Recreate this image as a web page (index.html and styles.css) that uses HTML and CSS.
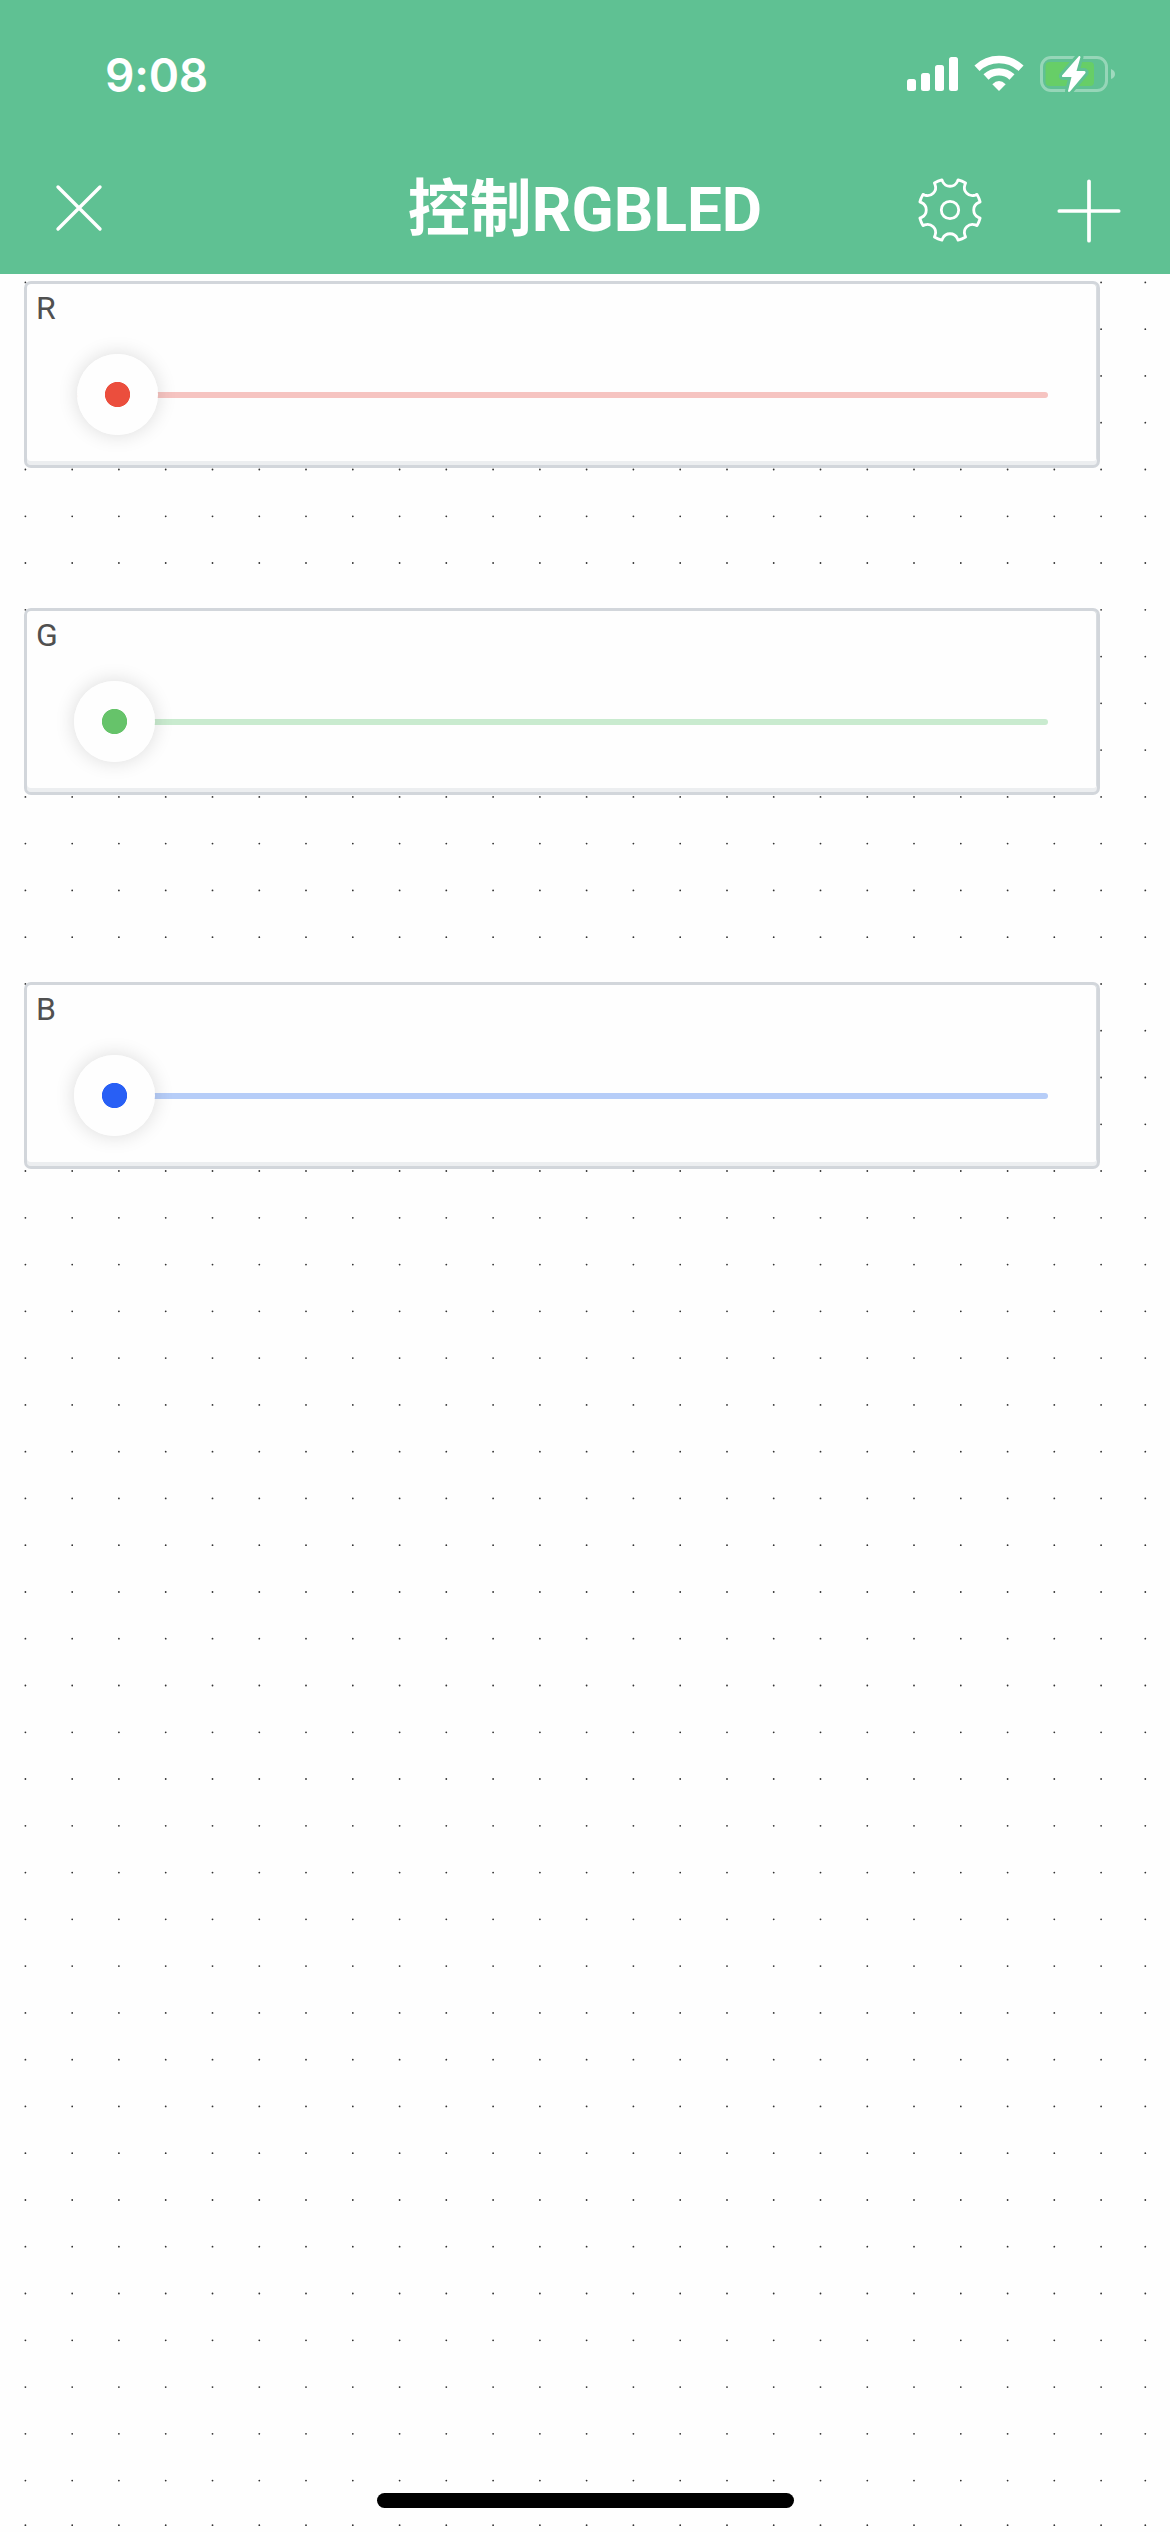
FILE: index.html
```html
<!DOCTYPE html>
<html lang="zh-CN">
<head>
<meta charset="utf-8">
<title>控制RGBLED</title>
<link rel="stylesheet" href="styles.css">
</head>
<body>
<header class="header">
  <div class="status">
    <span class="time">9:08</span>
    <svg class="status-icons" width="210" height="40" viewBox="906 54 210 40">
      <g fill="#fff">
        <rect x="907" y="79" width="9" height="12" rx="2.5"/>
        <rect x="921" y="73" width="9" height="18" rx="2.5"/>
        <rect x="935" y="65" width="9" height="26" rx="2.5"/>
        <rect x="949" y="57" width="9" height="34" rx="2.5"/>
      </g>
      <g fill="none" stroke="#fff" stroke-width="7.4">
        <path d="M977 68.2A32 32 0 0 1 1021 68.2"/>
        <path d="M986 77A19 19 0 0 1 1012 77"/>
      </g>
      <path d="M999 91L992.3 84.2Q999 77.8 1005.7 84.2Z" fill="#fff"/>
      <rect x="1041.5" y="57.5" width="65" height="33" rx="9.5" fill="none" stroke="#fff" stroke-opacity=".35" stroke-width="3"/>
      <path d="M1111 69Q1115 70.500 1115 74T1111 79Z" fill="#fff" fill-opacity=".4"/>
      <rect x="1045.500" y="62" width="48.500" height="24" rx="4" fill="#67ce67"/>
      <path d="M1079 56L1062 75.500Q1061.500 77 1063 77H1071.500L1068 91Q1068.500 92.500 1070 91.500L1085.500 73Q1086 71.500 1084.500 71H1076.500L1080.500 57Q1080 55.500 1079 56Z" fill="#fff" stroke="#5fc193" stroke-width="6" stroke-linejoin="round" paint-order="stroke"/>
    </svg>
  </div>
  <nav class="navbar">
    <svg class="close" width="48" height="48" viewBox="0 0 48 48"><path d="M3 3L45 45M45 3L3 45"/></svg>
    <h1 class="title">控制RGBLED</h1>
    <div class="actions">
      <svg class="gear" width="68" height="68" viewBox="-34 -34 68 68"><path id="gear-path" d=""/><circle r="8.700"/></svg>
      <svg class="plus" width="66" height="66" viewBox="-33 -33 66 66"><path d="M-29.700 0H29.700M0-29.700V29.700"/></svg>
    </div>
  </nav>
</header>
<main class="canvas">
  <svg class="grid" width="1170" height="2258" viewBox="0 274 1170 2258"><path id="grid-path"/></svg>
  <section class="card red"><span class="label">R</span><div class="slider"><div class="track"></div><div class="knob"></div></div></section>
  <section class="card green"><span class="label">G</span><div class="slider"><div class="track"></div><div class="knob"></div></div></section>
  <section class="card blue"><span class="label">B</span><div class="slider"><div class="track"></div><div class="knob"></div></div></section>
  <div class="home-indicator"></div>
</main>
<script src="script.js"></script>
</body>
</html>
```

FILE: styles.css
```css
* { box-sizing: border-box; }
body { margin: 0; background: #fefefe; font-family: Roboto, "Noto Sans CJK SC", sans-serif; }
.header { height: 274px; background: #5fc193; color: #fff; }
.status { height: 150px; padding: 54px 54px 0 105px; display: flex; justify-content: space-between; align-items: flex-start; }
.time { font: 600 46px/42px Inter, sans-serif; letter-spacing: -.2px; }
.status-icons { display: block; }
.navbar { height: 124px; padding: 0 51px 0 55px; display: grid; grid-template-columns: 300px 1fr 300px; }
.navbar svg { fill: none; stroke: #fff; stroke-linecap: round; stroke-linejoin: round; }
.close { margin-top: 34px; stroke-width: 3.4; }
.title { margin: 0 4px 0 0; text-align: center; white-space: nowrap; font-size: 62px; line-height: 119px; font-weight: 700; }
.actions { display: flex; justify-content: flex-end; gap: 72px; margin-right: -3px; }
.gear { margin-top: 26px; stroke-width: 2.8; }
.plus { margin-top: 28px; stroke-width: 3.7; }
.canvas { position: relative; height: 2258px; overflow: hidden; display: flex; flex-direction: column; align-items: flex-start; padding: 7px 0 0 24px; }
.grid { position: absolute; left: 0; top: 0; }
.grid path { fill: none; stroke: #333; stroke-width: 1.8; stroke-linecap: round; }
.card { position: relative; width: 1075.500px; height: 187px; padding: 5px 9px; background: #fefefe; border: 3px solid #d2d6db; border-radius: 7px; box-shadow: inset 0 -4px #eceef0, inset -1px 0 #d9dde1; }
.green { margin-top: 140px; --dot: #66c36a; --track: #c9ebcf; --knob-x: 0px; }
.blue { margin-top: 187px; --dot: #285ff5; --track: #b6cdf8; --knob-x: 0px; }
.red { --dot: #eb4e3d; --track: #f6c4c1; --knob-x: 3px; }
.label { display: block; font-size: 32px; line-height: 38px; color: #505050; }
.slider { height: 81px; margin: 27px 40px 0 38px; display: grid; align-items: center; }
.track, .knob { grid-area: 1 / 1; }
.track { height: 6px; margin-left: 3px; border-radius: 3px; background: var(--track); }
.knob { width: 81px; height: 81px; margin-left: var(--knob-x); border-radius: 50%; background: radial-gradient(circle, var(--dot) 12.200px, #fefefe 13px); box-shadow: 0 0 20px rgba(0,0,0,.14); }
.home-indicator { position: absolute; left: 377px; top: 2219px; width: 417px; height: 15px; border-radius: 8px; background: #000; }
```

FILE: script.js
```js
// Alignment grid: evenly pitched dots, with the last row and column pulled in to the edge.
const pitch = 46.77;
const xs = Array.from({ length: 24 }, (_, i) => 25.4 + i * pitch).concat(1145.3);
const ys = Array.from({ length: 48 }, (_, i) => 282.4 + i * pitch).concat(2525.2);
document.getElementById('grid-path').setAttribute('d',
  ys.map(y => xs.map(x => `M${x.toFixed(1)} ${y.toFixed(1)}h.01`).join('')).join(''));

// Eight-toothed gear outline with round notches between teeth.
const point = (r, deg) => {
  const a = deg * Math.PI / 180;
  return `${(r * Math.cos(a)).toFixed(2)} ${(r * Math.sin(a)).toFixed(2)}`;
};
let gear = '';
for (let i = 0; i < 8; i++) {
  const c = i * 45;
  gear += `${i ? 'L' : 'M'}${point(31.2, c - 15)}L${point(29.4, c - 14.5)}`;
  gear += `A8.1 8.1 0 0 0 ${point(29.4, c + 14.5)}L${point(31.2, c + 15)}`;
  gear += `A31.2 31.2 0 0 1 ${point(31.2, c + 30)}`;
}
document.getElementById('gear-path').setAttribute('d', gear + 'Z');
```
